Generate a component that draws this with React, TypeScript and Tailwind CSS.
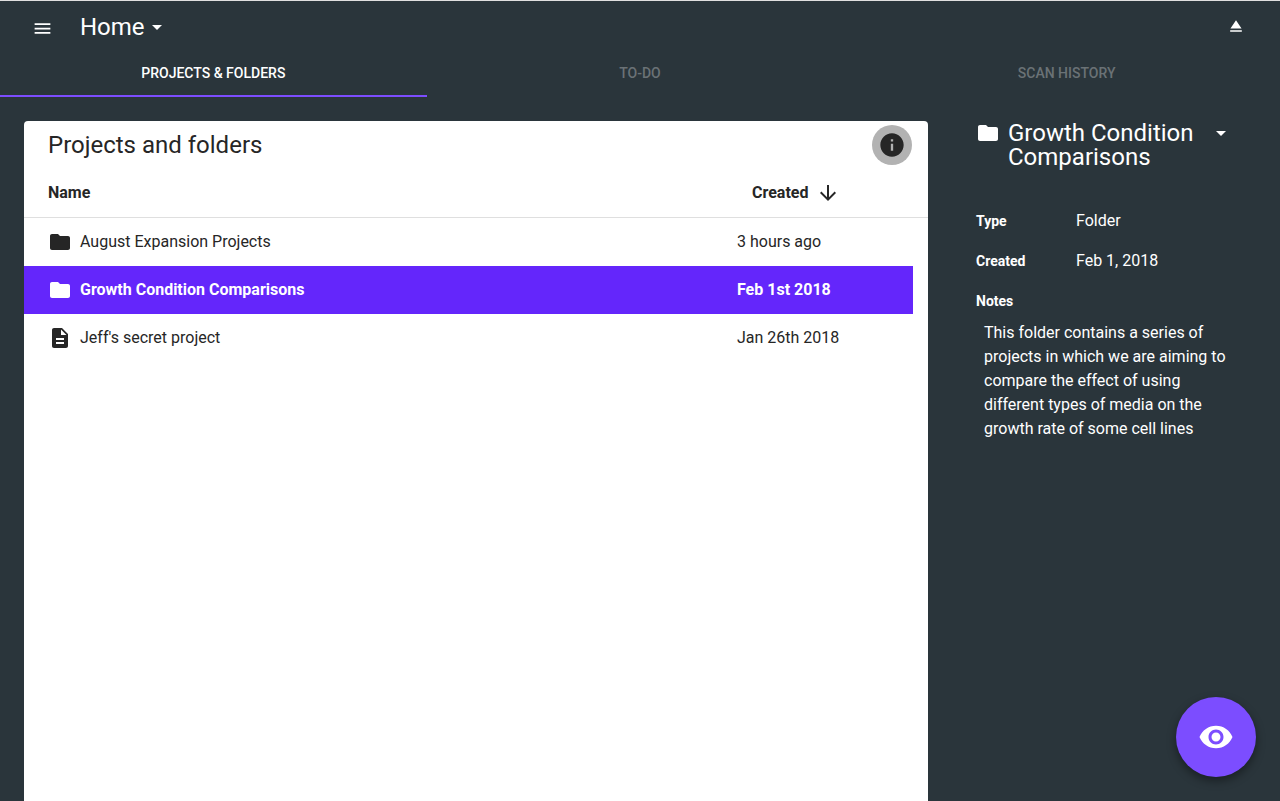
import {
  MdArrowDownward,
  MdArrowDropDown,
  MdDescription,
  MdEject,
  MdFolder,
  MdInfo,
  MdMenu,
  MdVisibility,
} from "react-icons/md";

type Item = {
  name: string;
  created: string;
  kind: "folder" | "project";
  selected?: boolean;
};

const items: Item[] = [
  { name: "August Expansion Projects", created: "3 hours ago", kind: "folder" },
  { name: "Growth Condition Comparisons", created: "Feb 1st 2018", kind: "folder", selected: true },
  { name: "Jeff's secret project", created: "Jan 26th 2018", kind: "project" },
];

const tabs = ["Projects & Folders", "To-Do", "Scan History"];

function Header() {
  return (
    <header className="flex h-12 items-center px-6 pt-1">
      <button type="button" aria-label="Menu" className="flex w-9 pt-0.5 pl-2">
        <MdMenu size={21} />
      </button>
      <button type="button" className="ml-5 flex items-center text-2xl leading-6">
        Home
        <MdArrowDropDown size={24} />
      </button>
      <button type="button" aria-label="Sign out" className="ml-auto flex w-10 justify-center pb-0.5">
        <MdEject size={20} />
      </button>
    </header>
  );
}

function Tabs() {
  return (
    <nav role="tablist" className="grid h-12 grid-cols-3">
      {tabs.map((tab, i) => (
        <button
          key={tab}
          type="button"
          role="tab"
          aria-selected={i === 0}
          className={
            i === 0
              ? "border-y-2 border-t-transparent border-b-[#7c4dff] text-sm font-medium uppercase"
              : "border-y-2 border-transparent text-sm font-medium text-[#6a7276] uppercase"
          }
        >
          {tab}
        </button>
      ))}
    </nav>
  );
}

function ItemRow({ item }: { item: Item }) {
  const Icon = item.kind === "folder" ? MdFolder : MdDescription;
  const tone = item.selected ? "bg-[#6426fb] font-bold text-white" : "";
  return (
    <tr className="h-12">
      <td className={`pl-6 ${tone}`}>
        <div className="flex items-center gap-2">
          <Icon size={24} className="shrink-0" />
          {item.name}
        </div>
      </td>
      <td className={tone}>{item.created}</td>
      <td />
    </tr>
  );
}

function ProjectCard() {
  return (
    <section className="flex-1 rounded-t bg-white text-[#262626]">
      <div className="flex h-12 items-center justify-between pr-4 pl-6">
        <h2 className="text-2xl leading-6">Projects and folders</h2>
        <button
          type="button"
          aria-label="Details"
          className="flex size-10 items-center justify-center rounded-full bg-[#b2b2b2]"
        >
          <MdInfo size={28} />
        </button>
      </div>
      <table className="w-full table-fixed border-separate border-spacing-0 text-left">
        <colgroup>
          <col />
          <col className="w-44" />
          <col className="w-[15px]" />
        </colgroup>
        <thead>
          <tr className="h-[49px]">
            <th className="border-b border-[#dfdfdf] pl-6 font-bold">Name</th>
            <th className="border-b border-[#dfdfdf] pl-[15px] font-bold" aria-sort="descending">
              <button type="button" className="flex items-center gap-2">
                Created
                <MdArrowDownward size={24} />
              </button>
            </th>
            <td className="border-b border-[#dfdfdf]" />
          </tr>
        </thead>
        <tbody>
          {items.map((item) => (
            <ItemRow key={item.name} item={item} />
          ))}
        </tbody>
      </table>
    </section>
  );
}

function Details() {
  return (
    <aside className="w-1/4 px-4">
      <div className="flex items-start gap-2">
        <MdFolder size={24} className="shrink-0" />
        <h2 className="flex-1 text-2xl leading-6">Growth Condition Comparisons</h2>
        <button type="button" aria-label="Folder actions" className="mr-[31px]">
          <MdArrowDropDown size={24} />
        </button>
      </div>
      <dl className="mt-8">
        <div className="flex h-10 items-center">
          <dt className="w-25 text-sm font-bold">Type</dt>
          <dd>Folder</dd>
        </div>
        <div className="flex h-10 items-center">
          <dt className="w-25 text-sm font-bold">Created</dt>
          <dd>Feb 1, 2018</dd>
        </div>
        <dt className="flex h-10 items-center text-sm font-bold">Notes</dt>
        <dd className="pr-8 pl-2">
          This folder contains a series of projects in which we are aiming to compare the effect of
          using different types of media on the growth rate of some cell lines
        </dd>
      </dl>
    </aside>
  );
}

export default function App() {
  return (
    <div className="flex min-h-screen flex-col border-t border-[#e0e0e0] bg-[#2a353b] font-['Roboto',sans-serif] text-base text-white antialiased">
      <Header />
      <Tabs />
      <main className="flex flex-1 pt-6">
        <div className="flex w-3/4 pr-8 pl-6">
          <ProjectCard />
        </div>
        <Details />
      </main>
      <button
        type="button"
        aria-label="View"
        className="fixed right-6 bottom-6 flex size-20 items-center justify-center rounded-full bg-[#7c4dff] shadow-[0_4px_10px_rgba(0,0,0,0.4)]"
      >
        <MdVisibility size={36} />
      </button>
    </div>
  );
}
